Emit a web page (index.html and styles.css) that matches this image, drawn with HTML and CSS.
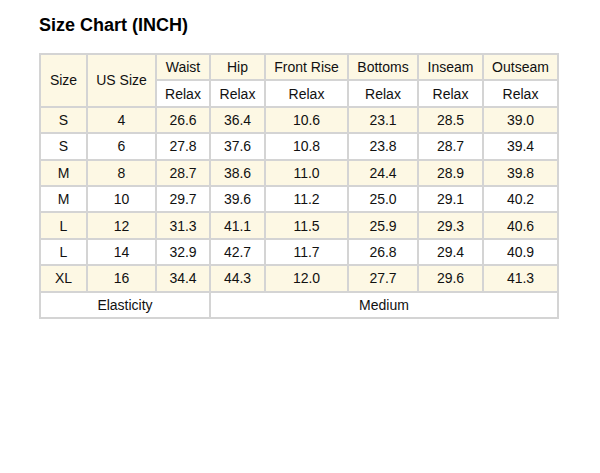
FILE: index.html
```html
<!DOCTYPE html>
<html>
<head>
<meta charset="utf-8">
<link rel="stylesheet" href="styles.css">
</head>
<body>
<div class="page">
  <h1 class="title">Size Chart (INCH)</h1>
  <table class="chart">
    <colgroup>
      <col class="c1"><col class="c2"><col class="c3"><col class="c4"><col class="c5"><col class="c6"><col class="c7"><col class="c8">
    </colgroup>
    <tr class="cream">
      <td rowspan="2">Size</td><td rowspan="2">US Size</td><td>Waist</td><td>Hip</td><td>Front Rise</td><td>Bottoms</td><td>Inseam</td><td>Outseam</td>
    </tr>
    <tr class="white">
      <td>Relax</td><td>Relax</td><td>Relax</td><td>Relax</td><td>Relax</td><td>Relax</td>
    </tr>
    <tr class="cream"><td>S</td><td>4</td><td>26.6</td><td>36.4</td><td>10.6</td><td>23.1</td><td>28.5</td><td>39.0</td></tr>
    <tr class="white"><td>S</td><td>6</td><td>27.8</td><td>37.6</td><td>10.8</td><td>23.8</td><td>28.7</td><td>39.4</td></tr>
    <tr class="cream"><td>M</td><td>8</td><td>28.7</td><td>38.6</td><td>11.0</td><td>24.4</td><td>28.9</td><td>39.8</td></tr>
    <tr class="white"><td>M</td><td>10</td><td>29.7</td><td>39.6</td><td>11.2</td><td>25.0</td><td>29.1</td><td>40.2</td></tr>
    <tr class="cream"><td>L</td><td>12</td><td>31.3</td><td>41.1</td><td>11.5</td><td>25.9</td><td>29.3</td><td>40.6</td></tr>
    <tr class="white"><td>L</td><td>14</td><td>32.9</td><td>42.7</td><td>11.7</td><td>26.8</td><td>29.4</td><td>40.9</td></tr>
    <tr class="cream"><td>XL</td><td>16</td><td>34.4</td><td>44.3</td><td>12.0</td><td>27.7</td><td>29.6</td><td>41.3</td></tr>
    <tr class="white"><td colspan="3">Elasticity</td><td colspan="5">Medium</td></tr>
  </table>
</div>
</body>
</html>
```
FILE: styles.css
```css
html, body {
  margin: 0;
  padding: 0;
  background: #ffffff;
}
.page {
  padding: 13px 0 0 39px;
  font-family: "Liberation Sans", Arial, sans-serif;
  color: #111;
}
.title {
  margin: 0 0 16px 0;
  font-size: 18px;
  font-weight: bold;
  line-height: 24px;
  color: #000;
}
.chart {
  border-collapse: collapse;
  table-layout: fixed;
  width: 518px;
  font-size: 14px;
}
.chart td {
  border: 2px solid #d4d4d4;
  text-align: center;
  vertical-align: middle;
  height: 24.4px;
  padding: 0;
  line-height: 16px;
}
.cream td { background: #fdf8e4; }
.white td { background: #ffffff; }
.c1 { width: 47px; }
.c2 { width: 69px; }
.c3 { width: 54px; }
.c4 { width: 55px; }
.c5 { width: 83px; }
.c6 { width: 70px; }
.c7 { width: 65px; }
.c8 { width: 75px; }
```
